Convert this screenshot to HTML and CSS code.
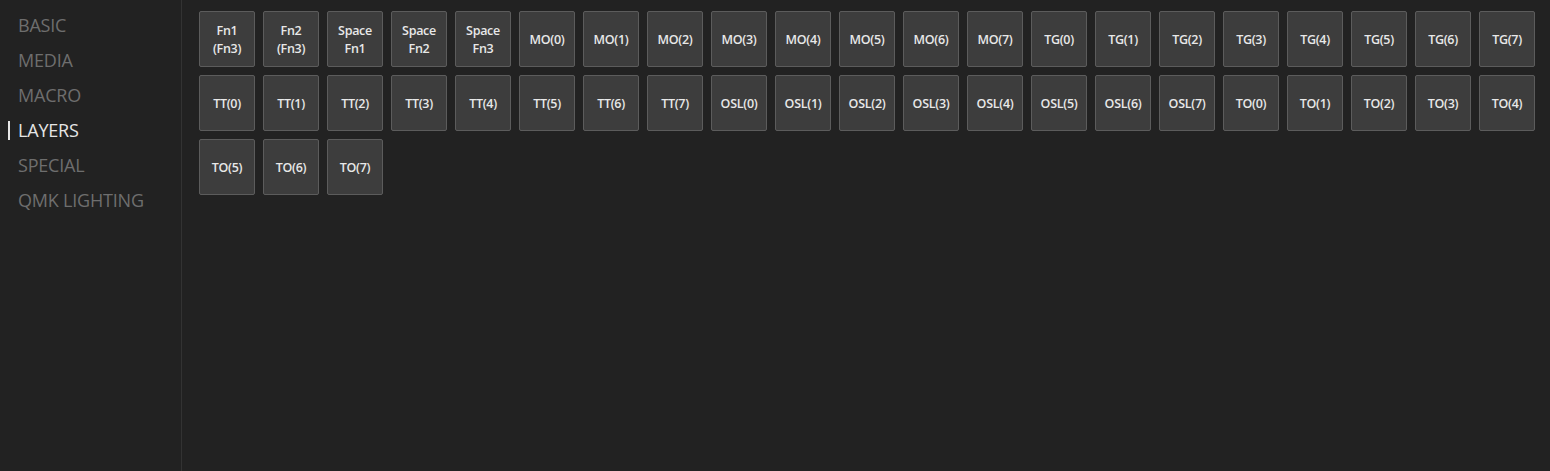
FILE: index.html
```html
<!DOCTYPE html>
<html>
<head>
<meta charset="utf-8">
<link rel="stylesheet" href="styles.css">
</head>
<body>
<div class="app">
  <nav class="sidebar">
    <div class="menu-item">BASIC</div>
    <div class="menu-item">MEDIA</div>
    <div class="menu-item">MACRO</div>
    <div class="menu-item active">LAYERS</div>
    <div class="menu-item">SPECIAL</div>
    <div class="menu-item">QMK LIGHTING</div>
  </nav>
  <main class="keys">
    <div class="key">Fn1<br>(Fn3)</div>
    <div class="key">Fn2<br>(Fn3)</div>
    <div class="key">Space<br>Fn1</div>
    <div class="key">Space<br>Fn2</div>
    <div class="key">Space<br>Fn3</div>
    <div class="key">MO(0)</div>
    <div class="key">MO(1)</div>
    <div class="key">MO(2)</div>
    <div class="key">MO(3)</div>
    <div class="key">MO(4)</div>
    <div class="key">MO(5)</div>
    <div class="key">MO(6)</div>
    <div class="key">MO(7)</div>
    <div class="key">TG(0)</div>
    <div class="key">TG(1)</div>
    <div class="key">TG(2)</div>
    <div class="key">TG(3)</div>
    <div class="key">TG(4)</div>
    <div class="key">TG(5)</div>
    <div class="key">TG(6)</div>
    <div class="key">TG(7)</div>
    <div class="key">TT(0)</div>
    <div class="key">TT(1)</div>
    <div class="key">TT(2)</div>
    <div class="key">TT(3)</div>
    <div class="key">TT(4)</div>
    <div class="key">TT(5)</div>
    <div class="key">TT(6)</div>
    <div class="key">TT(7)</div>
    <div class="key">OSL(0)</div>
    <div class="key">OSL(1)</div>
    <div class="key">OSL(2)</div>
    <div class="key">OSL(3)</div>
    <div class="key">OSL(4)</div>
    <div class="key">OSL(5)</div>
    <div class="key">OSL(6)</div>
    <div class="key">OSL(7)</div>
    <div class="key">TO(0)</div>
    <div class="key">TO(1)</div>
    <div class="key">TO(2)</div>
    <div class="key">TO(3)</div>
    <div class="key">TO(4)</div>
    <div class="key">TO(5)</div>
    <div class="key">TO(6)</div>
    <div class="key">TO(7)</div>
  </main>
</div>
</body>
</html>
```
FILE: styles.css
```css
html, body {
  margin: 0;
  padding: 0;
  background: #222222;
  height: 100%;
}
.app {
  display: flex;
  height: 471px;
  font-family: "Open Sans", "Noto Sans", sans-serif;
}
.sidebar {
  width: 181px;
  flex: none;
  border-right: 1px solid #333333;
  padding-top: 8px;
  box-sizing: content-box;
}
.menu-item {
  height: 35px;
  line-height: 35px;
  font-size: 18px;
  color: #6e6e6e;
  padding-left: 18px;
  position: relative;
  letter-spacing: -0.2px;
}
.menu-item.active {
  color: #e6e6e6;
}
.menu-item.active::before {
  content: "";
  position: absolute;
  left: 8px;
  top: 8px;
  width: 2px;
  height: 19px;
  background: #e6e6e6;
}
.keys {
  flex: 1;
  display: grid;
  grid-template-columns: repeat(21, 56px);
  grid-auto-rows: 56px;
  gap: 8px;
  padding: 11px 15px 0 17px;
  align-content: start;
}
.key {
  box-sizing: border-box;
  background: #3d3d3d;
  border: 1px solid #5c5c5c;
  border-radius: 2px;
  color: #e8e8e8;
  font-size: 12.5px;
  font-weight: 600;
  line-height: 18px;
  letter-spacing: -0.3px;
  padding-top: 1px;
  display: flex;
  align-items: center;
  justify-content: center;
  text-align: center;
}
```
